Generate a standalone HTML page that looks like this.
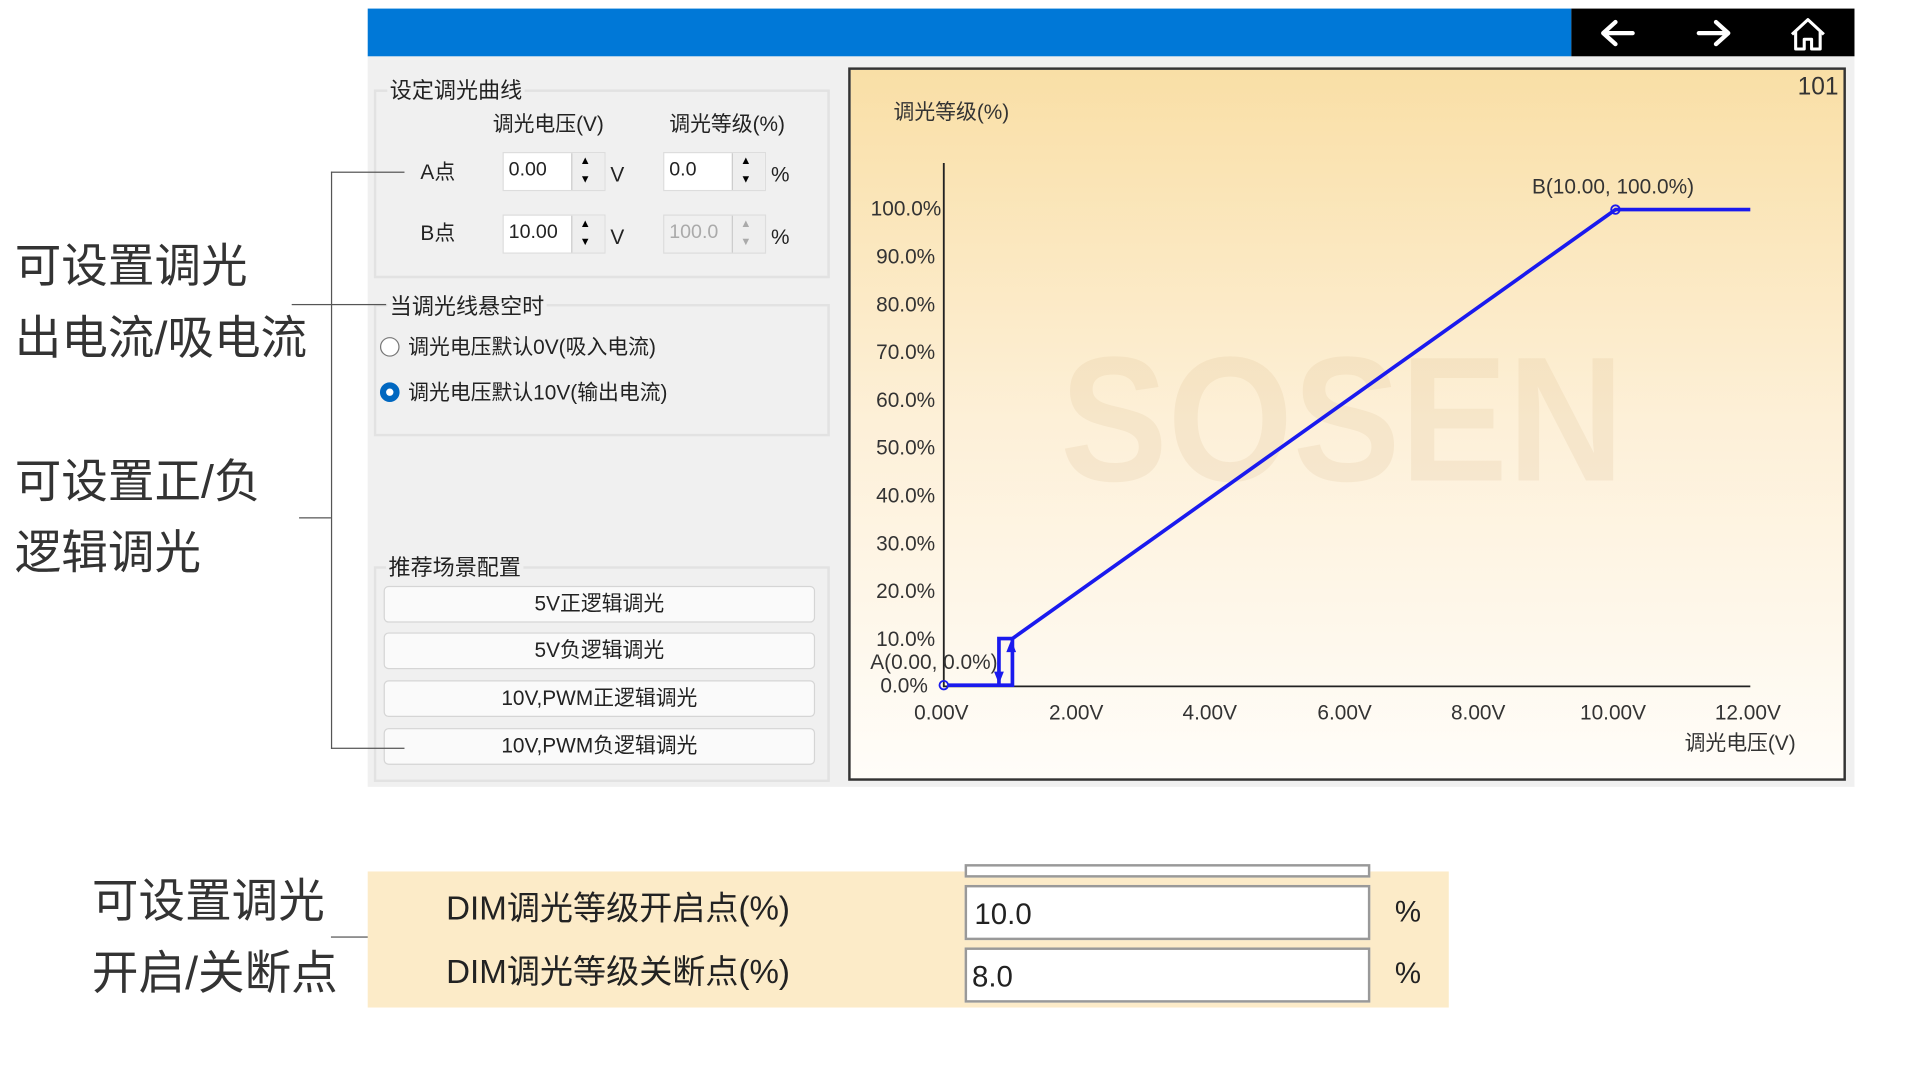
<!DOCTYPE html>
<html><head><meta charset="utf-8">
<style>
html,body{margin:0;padding:0;background:#fff;width:1920px;height:1080px;overflow:hidden}
#w{position:absolute;left:0;top:0;width:1550px;height:872px;transform:scale(1.2257);transform-origin:0 0;font-family:"Liberation Sans","Noto Sans CJK SC",sans-serif}
.a{position:absolute}
.big{font-size:38px;color:#333;line-height:40px;white-space:nowrap}
.ln{position:absolute;background:#555}
.grp{position:absolute;border:2px solid #e2e2e2}
.gt{position:absolute;background:#f0f0f0;font-size:18px;color:#222;padding:0 2px;line-height:20px}
.s{font-size:17px;color:#222;white-space:nowrap;line-height:20px}
.inp{position:absolute;width:84px;height:32px;background:#fff;border:1px solid #ddd;box-sizing:border-box}
.inp span{position:absolute;left:4px;top:5px;font-size:16px;color:#222}
.inp i{position:absolute;right:0;top:0;width:26px;height:30px;background:#eee;border-left:1px solid #ccc}
.inp i:before{content:"▲";position:absolute;left:6px;top:1px;font-size:9px;font-style:normal}
.inp i:after{content:"▼";position:absolute;left:6px;top:16px;font-size:9px;font-style:normal}
.btn{position:absolute;left:313px;width:352px;height:30px;background:#fafafa;border:1px solid #d5d5d5;border-radius:4px;box-sizing:border-box;text-align:center;font-size:17px;line-height:28px;color:#222}
.rad{position:absolute;width:16px;height:16px;border-radius:50%;box-sizing:border-box}
</style></head><body><div id="w">
<div class="a" style="left:300px;top:7px;width:982px;height:39px;background:#0078d7"></div>
<div class="a" style="left:1282px;top:7px;width:231px;height:39px;background:#000"></div>
<svg class="a" style="left:1282px;top:7px" width="231" height="39" viewBox="0 0 231 39">
<g stroke="#fff" stroke-width="3.5" fill="none" stroke-linecap="round" stroke-linejoin="round">
<path d="M26 20H50M36 11L26 20L36 29"/><path d="M104 20H128M118 11L128 20L118 29"/>
</g>
<path d="M180 21L193 9L206 21M183 19V33H190V25H196V33H203V19" stroke="#fff" stroke-width="2.5" fill="none" stroke-linejoin="round"/>
</svg>
<div class="a" style="left:300px;top:46px;width:1213px;height:596px;background:#f0f0f0"></div>

<div class="grp" style="left:305px;top:73px;width:368px;height:150px"></div>
<div class="gt" style="left:316px;top:64px">设定调光曲线</div>
<div class="a s" style="left:402px;top:92px">调光电压(V)</div>
<div class="a s" style="left:546px;top:92px">调光等级(%)</div>
<div class="a s" style="left:343px;top:131px">A点</div>
<div class="a s" style="left:343px;top:181px">B点</div>
<div class="inp" style="left:410px;top:124px"><span>0.00</span><i></i></div>
<div class="inp" style="left:410px;top:175px"><span>10.00</span><i></i></div>
<div class="inp" style="left:541px;top:124px"><span>0.0</span><i></i></div>
<div class="inp" style="left:541px;top:175px;background:#f0f0f0"><span style="color:#aaa">100.0</span><i style="color:#aaa"></i></div>
<div class="a s" style="left:498px;top:133px">V</div><div class="a s" style="left:498px;top:184px">V</div>
<div class="a s" style="left:629px;top:133px">%</div><div class="a s" style="left:629px;top:184px">%</div>

<div class="grp" style="left:305px;top:248px;width:368px;height:104px"></div>
<div class="gt" style="left:316px;top:240px">当调光线悬空时</div>
<div class="rad" style="left:310px;top:275px;border:1.5px solid #777;background:#fff"></div>
<div class="a s" style="left:333px;top:274px">调光电压默认0V(吸入电流)</div>
<div class="rad" style="left:310px;top:312px;border:5px solid #0067c0;background:#fff"></div>
<div class="a s" style="left:333px;top:311px">调光电压默认10V(输出电流)</div>

<div class="grp" style="left:305px;top:462px;width:368px;height:172px"></div>
<div class="gt" style="left:315px;top:453px">推荐场景配置</div>
<div class="btn" style="top:478px">5V正逻辑调光</div>
<div class="btn" style="top:516px">5V负逻辑调光</div>
<div class="btn" style="top:555px">10V,PWM正逻辑调光</div>
<div class="btn" style="top:594px">10V,PWM负逻辑调光</div>

<div class="a" style="left:692px;top:55px;width:814px;height:582px;box-sizing:border-box;border:2px solid #333;background:linear-gradient(#f9dfa6,#fdf0d8 50%,#fffdf9)"></div>
<svg class="a" style="left:0;top:0" width="1550" height="872" viewBox="0 0 1550 872" font-family="Liberation Sans, Noto Sans CJK SC, sans-serif">
<text x="1095" y="392" font-size="145" font-weight="bold" fill="#c9a66b" fill-opacity="0.13" text-anchor="middle" textLength="460" lengthAdjust="spacingAndGlyphs">SOSEN</text>
<text x="1500" y="77" font-size="20" fill="#333" text-anchor="end">101</text>
<text x="729" y="97" font-size="17" fill="#333">调光等级(%)</text>
<path d="M770 133V560H1428" stroke="#222" stroke-width="1.5" fill="none"/>
<g font-size="17" fill="#333" text-anchor="end">
<text x="768" y="176">100.0%</text><text x="763" y="215">90.0%</text><text x="763" y="254">80.0%</text><text x="763" y="293">70.0%</text><text x="763" y="332">60.0%</text><text x="763" y="371">50.0%</text><text x="763" y="410">40.0%</text><text x="763" y="449">30.0%</text><text x="763" y="488">20.0%</text><text x="763" y="527">10.0%</text><text x="757" y="565">0.0%</text>
</g>
<text x="710" y="546" font-size="17" fill="#333">A(0.00, 0.0%)</text>
<g font-size="17" fill="#333" text-anchor="middle">
<text x="768" y="587">0.00V</text><text x="878" y="587">2.00V</text><text x="987" y="587">4.00V</text><text x="1097" y="587">6.00V</text><text x="1206" y="587">8.00V</text><text x="1316" y="587">10.00V</text><text x="1426" y="587">12.00V</text>
</g>
<text x="1465" y="612" font-size="17" fill="#333" text-anchor="end">调光电压(V)</text>
<text x="1316" y="158" font-size="17" fill="#333" text-anchor="middle">B(10.00, 100.0%)</text>
<g stroke="#1a1aee" stroke-width="3" fill="none">
<path d="M773 559H826V521H815V559"/>
<path d="M826 521L1318 171H1428"/>
<circle cx="770" cy="559" r="3.5" stroke-width="1.5"/><circle cx="1318" cy="171" r="3.5" stroke-width="1.5"/>
</g>
<path d="M825 522l-4 10h8zM815 558l-4-10h8z" fill="#1a1aee"/>
</svg>

<div class="ln" style="left:270px;top:140px;width:1px;height:471px"></div>
<div class="ln" style="left:270px;top:140px;width:60px;height:1px"></div>
<div class="ln" style="left:270px;top:610px;width:60px;height:1px"></div>
<div class="ln" style="left:238px;top:248px;width:77px;height:1px"></div>
<div class="ln" style="left:244px;top:422px;width:26px;height:1px"></div>
<div class="ln" style="left:270px;top:764px;width:60px;height:1px"></div>
<div class="a big" style="left:12px;top:198px">可设置调光</div>
<div class="a big" style="left:12px;top:257px">出电流/吸电流</div>
<div class="a big" style="left:12px;top:374px">可设置正/负</div>
<div class="a big" style="left:12px;top:432px">逻辑调光</div>
<div class="a big" style="left:75px;top:716px">可设置调光</div>
<div class="a big" style="left:75px;top:775px">开启/关断点</div>

<div class="a" style="left:300px;top:711px;width:882px;height:111px;background:#fcebc8"></div>
<div class="a" style="left:787px;top:705px;width:331px;height:11px;background:#fff;border:2px solid #999;box-sizing:border-box"></div>
<div class="a" style="left:787px;top:722px;width:331px;height:45px;background:#fff;border:2px solid #999;box-sizing:border-box;font-size:24px;line-height:45px;padding-left:6px;color:#222">10.0</div>
<div class="a" style="left:787px;top:773px;width:331px;height:45px;background:#fff;border:2px solid #999;box-sizing:border-box;font-size:24px;line-height:45px;padding-left:4px;color:#222">8.0</div>
<div class="a" style="left:364px;top:719px;font-size:27px;color:#222;white-space:nowrap">DIM调光等级开启点(%)</div>
<div class="a" style="left:364px;top:771px;font-size:27px;color:#222;white-space:nowrap">DIM调光等级关断点(%)</div>
<div class="a" style="left:1138px;top:731px;font-size:24px;color:#222">%</div>
<div class="a" style="left:1138px;top:781px;font-size:24px;color:#222">%</div>
</div></body></html>
